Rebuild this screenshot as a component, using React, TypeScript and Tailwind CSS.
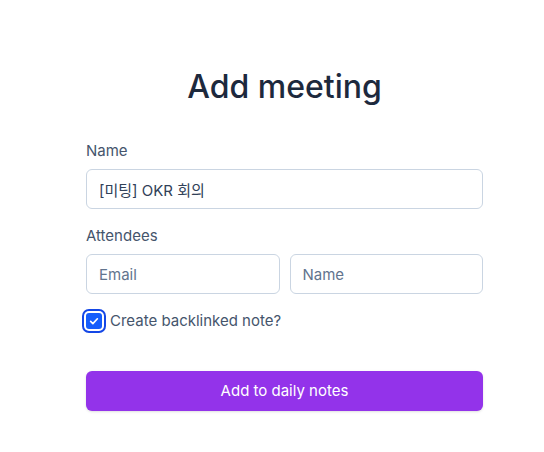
import { useState } from 'react'

export default function App() {
  const [name, setName] = useState('[미팅] OKR 회의')
  const [backlink, setBacklink] = useState(true)

  return (
    <div
      className="min-h-[452px] bg-white pt-[67px]"
      style={{ fontFamily: 'Inter, "Noto Sans CJK KR", sans-serif' }}
    >
      <div className="mx-auto w-[422px] pl-[25px]">
        <h1 className="text-center text-[32px] leading-10 font-medium text-slate-800">Add meeting</h1>

        <form className="mt-[34px] flex flex-col" onSubmit={(e) => e.preventDefault()}>
          <label className="text-[15px] leading-5 text-slate-600">Name</label>
          <input
            value={name}
            onChange={(e) => setName(e.target.value)}
            className="mt-2 h-10 w-full rounded-md border border-slate-300 px-3 text-[15px] text-slate-700 outline-none"
          />

          <label className="mt-[17px] text-[15px] leading-5 text-slate-600">Attendees</label>
          <div className="mt-2 flex gap-[10px]">
            <input
              placeholder="Email"
              className="h-10 min-w-0 flex-1 rounded-md border border-slate-300 px-3 text-[15px] text-slate-700 placeholder:text-slate-500 outline-none"
            />
            <input
              placeholder="Name"
              className="h-10 min-w-0 flex-1 rounded-md border border-slate-300 px-3 text-[15px] text-slate-700 placeholder:text-slate-500 outline-none"
            />
          </div>

          <label className="mt-[17px] flex items-center gap-2 text-[15px] leading-5 text-slate-600">
            <button
              type="button"
              onClick={() => setBacklink(!backlink)}
              className="flex h-4 w-4 items-center justify-center rounded-[3px] bg-blue-600 ring-2 ring-blue-700 ring-offset-2"
            >
              {backlink && (
                <svg viewBox="0 0 16 16" className="h-3 w-3 text-white" fill="none">
                  <path d="M3.5 8.5l3 3 6-6.5" stroke="currentColor" strokeWidth="2.2" strokeLinecap="round" strokeLinejoin="round" />
                </svg>
              )}
            </button>
            <span>Create backlinked note?</span>
          </label>

          <button
            type="submit"
            className="mt-10 h-10 w-full rounded-md bg-[#9333ea] text-[15px] font-normal text-white shadow-sm"
          >
            Add to daily notes
          </button>
        </form>
      </div>
    </div>
  )
}
